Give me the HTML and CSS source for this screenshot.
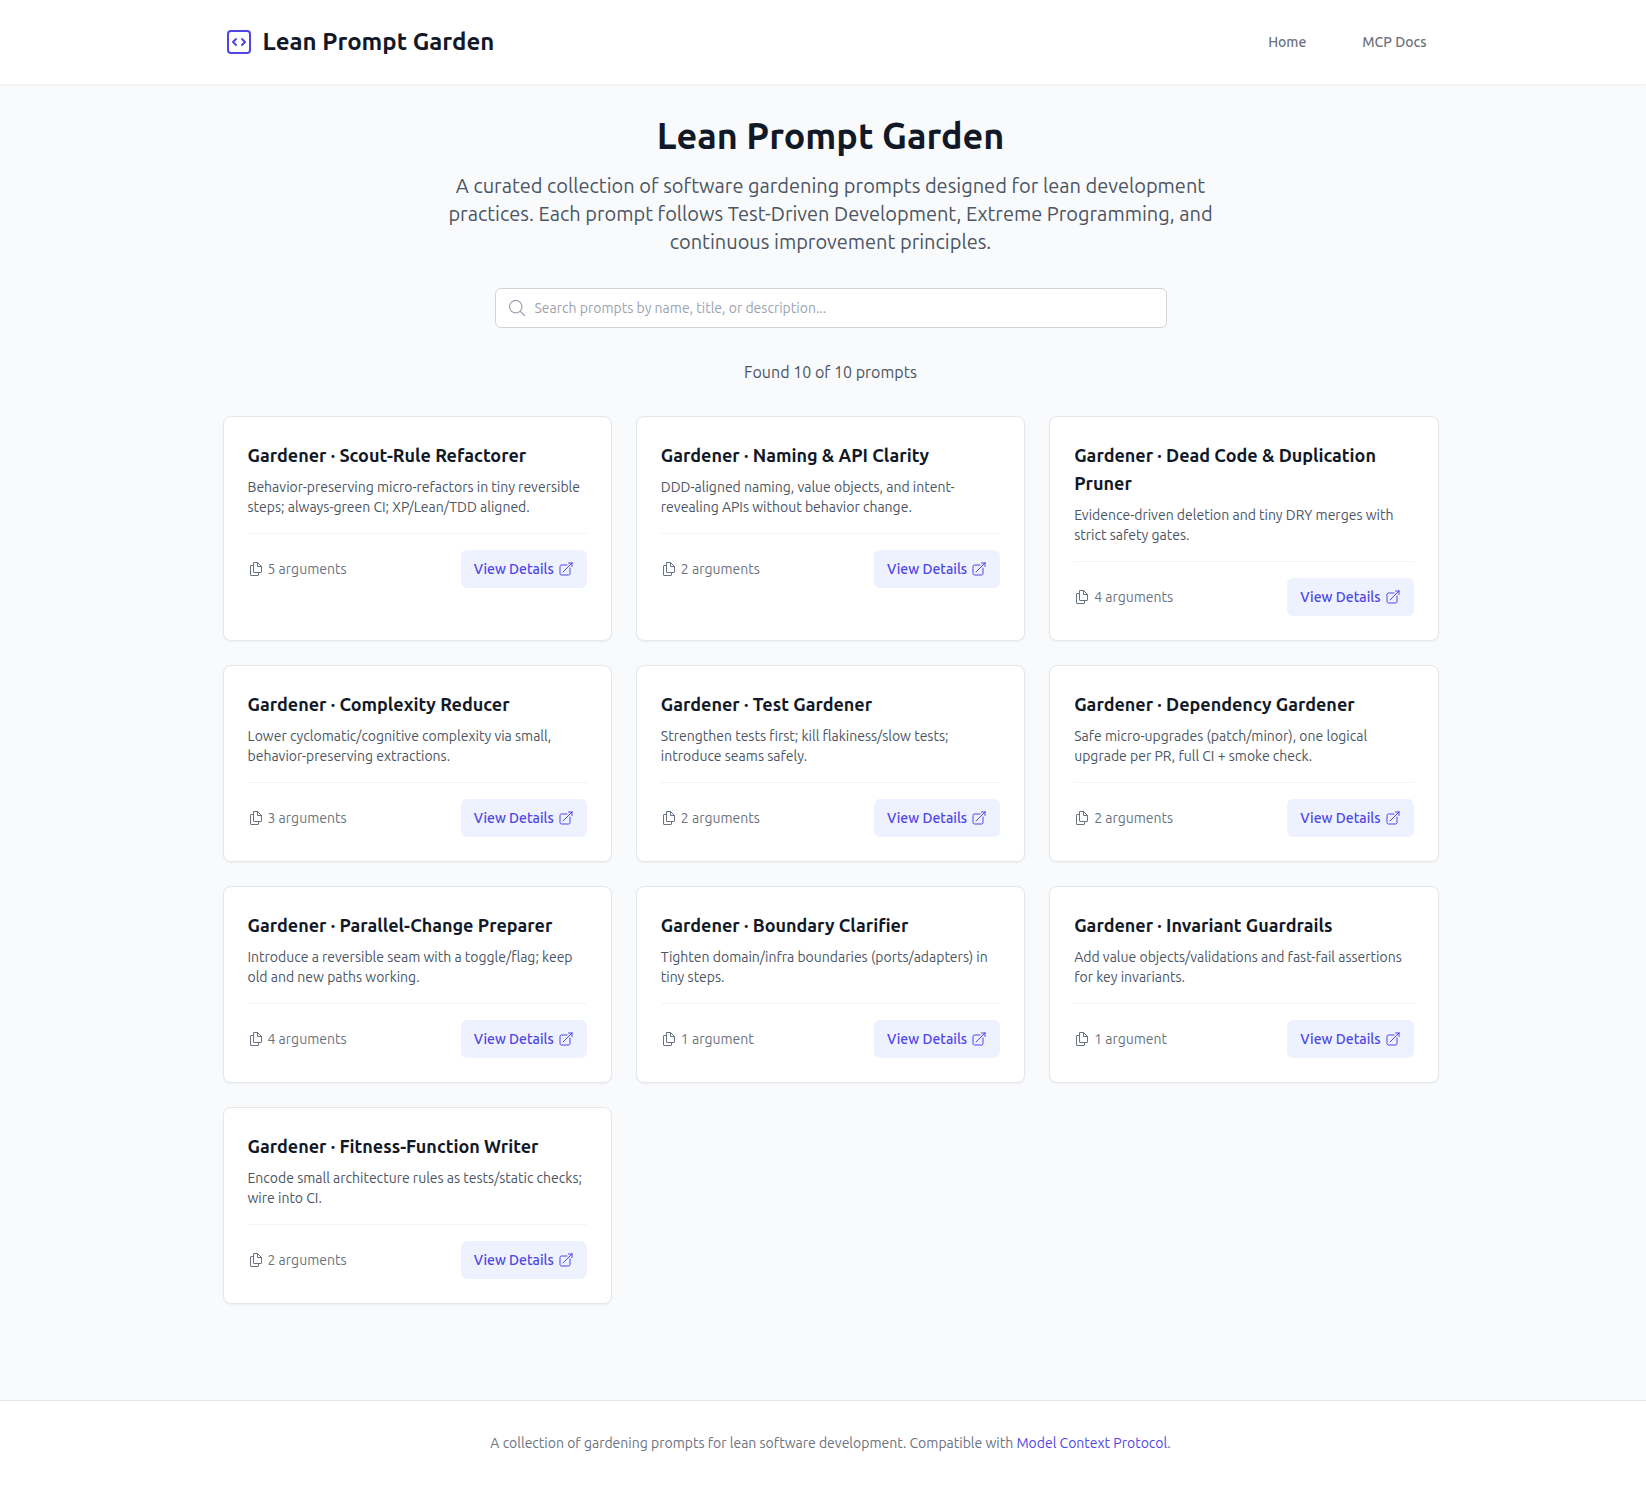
FILE: index.html
```html
<!DOCTYPE html>
<html lang="en">
<head>
<meta charset="utf-8">
<title>Lean Prompt Garden</title>
<meta name="viewport" content="width=device-width, initial-scale=1">
<link rel="stylesheet" href="styles.css">
</head>
<body>
<svg class="sprite" aria-hidden="true">
  <symbol id="icon-code" viewBox="0 0 24 24"><path d="M14.25 9.75 16.5 12l-2.25 2.25m-4.5 0L7.5 12l2.25-2.25M6 20.25h12A2.25 2.25 0 0 0 20.25 18V6A2.25 2.25 0 0 0 18 3.75H6A2.25 2.25 0 0 0 3.75 6v12A2.25 2.25 0 0 0 6 20.25Z"/></symbol>
  <symbol id="icon-search" viewBox="0 0 24 24"><path d="m21 21-5.197-5.197m0 0A7.5 7.5 0 1 0 5.196 5.196a7.5 7.5 0 0 0 10.607 10.607Z"/></symbol>
  <symbol id="icon-docs" viewBox="0 0 24 24"><path d="M8.25 6.75H4.5a.75.75 0 0 0-.75.75V21a.75.75 0 0 0 .75.75H15a.75.75 0 0 0 .75-.75v-3.75M9 2.25h5.25l6 6v8.25a.75.75 0 0 1-.75.75H9a.75.75 0 0 1-.75-.75V3A.75.75 0 0 1 9 2.25ZM14.25 2.25v6h6"/></symbol>
  <symbol id="icon-open" viewBox="0 0 24 24"><path d="M13.5 6H5.25A2.25 2.25 0 0 0 3 8.25v10.5A2.25 2.25 0 0 0 5.25 21h10.5A2.25 2.25 0 0 0 18 18.75V10.5m-10.5 6L21 3m0 0h-5.25M21 3v5.25"/></symbol>
</svg>

<header class="site-header">
  <div class="container header-row">
    <a class="brand" href="#"><svg class="icon icon-lg" aria-hidden="true"><use href="#icon-code"/></svg><span>Lean Prompt Garden</span></a>
    <nav class="nav">
      <a class="nav-link" href="#">Home</a>
      <a class="nav-link" href="#">MCP Docs</a>
    </nav>
  </div>
</header>

<main class="main">
  <div class="container">
  <section class="hero">
    <h1 class="hero-title">Lean Prompt Garden</h1>
    <p class="hero-text">A curated collection of software gardening prompts designed for lean development practices. Each prompt follows Test-Driven Development, Extreme Programming, and continuous improvement principles.</p>
  </section>

  <label class="search">
    <svg class="icon icon-md" aria-hidden="true"><use href="#icon-search"/></svg>
    <input class="search-input" type="text" aria-label="Search prompts" placeholder="Search prompts by name, title, or description...">
  </label>

  <p class="count">Found 10 of 10 prompts</p>

  <section class="grid">
    <article class="card">
      <h2 class="card-title">Gardener · Scout-Rule Refactorer</h2>
      <p class="card-text">Behavior-preserving micro-refactors in tiny reversible steps; always-green CI; XP/Lean/TDD aligned.</p>
      <div class="card-footer">
        <span class="args"><svg class="icon icon-sm" aria-hidden="true"><use href="#icon-docs"/></svg>5 arguments</span>
        <a class="details" href="#">View Details<svg class="icon icon-sm" aria-hidden="true"><use href="#icon-open"/></svg></a>
      </div>
    </article>
    <article class="card">
      <h2 class="card-title">Gardener · Naming &amp; API Clarity</h2>
      <p class="card-text">DDD-aligned naming, value objects, and intent-revealing APIs without behavior change.</p>
      <div class="card-footer">
        <span class="args"><svg class="icon icon-sm" aria-hidden="true"><use href="#icon-docs"/></svg>2 arguments</span>
        <a class="details" href="#">View Details<svg class="icon icon-sm" aria-hidden="true"><use href="#icon-open"/></svg></a>
      </div>
    </article>
    <article class="card">
      <h2 class="card-title">Gardener · Dead Code &amp; Duplication Pruner</h2>
      <p class="card-text">Evidence-driven deletion and tiny DRY merges with strict safety gates.</p>
      <div class="card-footer">
        <span class="args"><svg class="icon icon-sm" aria-hidden="true"><use href="#icon-docs"/></svg>4 arguments</span>
        <a class="details" href="#">View Details<svg class="icon icon-sm" aria-hidden="true"><use href="#icon-open"/></svg></a>
      </div>
    </article>
    <article class="card">
      <h2 class="card-title">Gardener · Complexity Reducer</h2>
      <p class="card-text">Lower cyclomatic/cognitive complexity via small, behavior-preserving extractions.</p>
      <div class="card-footer">
        <span class="args"><svg class="icon icon-sm" aria-hidden="true"><use href="#icon-docs"/></svg>3 arguments</span>
        <a class="details" href="#">View Details<svg class="icon icon-sm" aria-hidden="true"><use href="#icon-open"/></svg></a>
      </div>
    </article>
    <article class="card">
      <h2 class="card-title">Gardener · Test Gardener</h2>
      <p class="card-text">Strengthen tests first; kill flakiness/slow tests; introduce seams safely.</p>
      <div class="card-footer">
        <span class="args"><svg class="icon icon-sm" aria-hidden="true"><use href="#icon-docs"/></svg>2 arguments</span>
        <a class="details" href="#">View Details<svg class="icon icon-sm" aria-hidden="true"><use href="#icon-open"/></svg></a>
      </div>
    </article>
    <article class="card">
      <h2 class="card-title">Gardener · Dependency Gardener</h2>
      <p class="card-text">Safe micro-upgrades (patch/minor), one logical upgrade per PR, full CI + smoke check.</p>
      <div class="card-footer">
        <span class="args"><svg class="icon icon-sm" aria-hidden="true"><use href="#icon-docs"/></svg>2 arguments</span>
        <a class="details" href="#">View Details<svg class="icon icon-sm" aria-hidden="true"><use href="#icon-open"/></svg></a>
      </div>
    </article>
    <article class="card">
      <h2 class="card-title">Gardener · Parallel-Change Preparer</h2>
      <p class="card-text">Introduce a reversible seam with a toggle/flag; keep old and new paths working.</p>
      <div class="card-footer">
        <span class="args"><svg class="icon icon-sm" aria-hidden="true"><use href="#icon-docs"/></svg>4 arguments</span>
        <a class="details" href="#">View Details<svg class="icon icon-sm" aria-hidden="true"><use href="#icon-open"/></svg></a>
      </div>
    </article>
    <article class="card">
      <h2 class="card-title">Gardener · Boundary Clarifier</h2>
      <p class="card-text">Tighten domain/infra boundaries (ports/adapters) in tiny steps.</p>
      <div class="card-footer">
        <span class="args"><svg class="icon icon-sm" aria-hidden="true"><use href="#icon-docs"/></svg>1 argument</span>
        <a class="details" href="#">View Details<svg class="icon icon-sm" aria-hidden="true"><use href="#icon-open"/></svg></a>
      </div>
    </article>
    <article class="card">
      <h2 class="card-title">Gardener · Invariant Guardrails</h2>
      <p class="card-text">Add value objects/validations and fast-fail assertions for key invariants.</p>
      <div class="card-footer">
        <span class="args"><svg class="icon icon-sm" aria-hidden="true"><use href="#icon-docs"/></svg>1 argument</span>
        <a class="details" href="#">View Details<svg class="icon icon-sm" aria-hidden="true"><use href="#icon-open"/></svg></a>
      </div>
    </article>
    <article class="card">
      <h2 class="card-title">Gardener · Fitness-Function Writer</h2>
      <p class="card-text">Encode small architecture rules as tests/static checks; wire into CI.</p>
      <div class="card-footer">
        <span class="args"><svg class="icon icon-sm" aria-hidden="true"><use href="#icon-docs"/></svg>2 arguments</span>
        <a class="details" href="#">View Details<svg class="icon icon-sm" aria-hidden="true"><use href="#icon-open"/></svg></a>
      </div>
    </article>
  </section>
  </div>
</main>

<footer class="site-footer">
  <div class="container">
    <p class="footer-text">A collection of gardening prompts for lean software development. Compatible with <a class="footer-link" href="#">Model Context Protocol</a>.</p>
  </div>
</footer>
</body>
</html>
```
FILE: styles.css
```css
*, *::before, *::after { box-sizing: border-box; }

body {
  margin: 0;
  background: #f9fafb;
  color: #111827;
  font-family: Ubuntu, Roboto, sans-serif;
  font-size: 16px;
  line-height: 24px;
}

h1, h2, p { margin: 0; }
a { color: inherit; text-decoration: none; }

.sprite { display: none; }

.icon {
  flex: none;
  fill: none;
  stroke: currentColor;
  stroke-width: 1.5;
  stroke-linecap: round;
  stroke-linejoin: round;
}
.icon-sm { width: 16px; height: 16px; }
.icon-md { width: 20px; height: 20px; }
.icon-lg { width: 32px; height: 32px; color: #4f46e5; }

.site-header, .main, .site-footer { padding-left: 15px; }

.container {
  max-width: 1280px;
  margin: 0 auto;
  padding: 0 32px;
}

.site-header {
  background: #fff;
  box-shadow: 0 1px 2px rgba(0, 0, 0, 0.05);
}
.header-row {
  display: flex;
  align-items: center;
  justify-content: space-between;
  padding-top: 24px;
  padding-bottom: 24px;
}
.brand {
  display: flex;
  align-items: center;
  gap: 8px;
  font-size: 24px;
  line-height: 36px;
  font-weight: 600;
}
.nav { display: flex; gap: 32px; }
.nav-link {
  padding: 8px 12px;
  color: #6b7280;
  font-size: 14px;
  line-height: 20px;
  font-weight: 500;
}

.main { padding-top: 32px; padding-bottom: 96px; }

.hero {
  max-width: 768px;
  margin: 0 auto 32px;
  text-align: center;
}
.hero-title {
  margin-bottom: 16px;
  font-size: 36px;
  line-height: 40px;
  font-weight: 600;
}
.hero-text {
  color: #4b5563;
  font-size: 20px;
  line-height: 28px;
}

.search {
  display: flex;
  align-items: center;
  gap: 8px;
  max-width: 672px;
  height: 40px;
  margin: 0 auto 32px;
  padding: 0 11px;
  border: 1px solid #d1d5db;
  border-radius: 6px;
  background: #fff;
  color: #9ca3af;
}
.search-input {
  flex: 1;
  min-width: 0;
  padding: 0;
  border: 0;
  outline: 0;
  background: transparent;
  color: #111827;
  font: inherit;
  font-size: 14px;
  line-height: 20px;
}
.search-input::placeholder { color: #9ca3af; }

.count {
  margin-bottom: 32px;
  color: #4b5563;
  text-align: center;
}

.grid {
  display: grid;
  grid-template-columns: repeat(3, minmax(0, 1fr));
  gap: 24px;
}
.card {
  padding: 24px;
  border: 1px solid #e5e7eb;
  border-radius: 8px;
  background: #fff;
  box-shadow: 0 1px 2px rgba(0, 0, 0, 0.05);
}
.card-title {
  margin-bottom: 8px;
  font-size: 18px;
  line-height: 28px;
  font-weight: 600;
}
.card-text {
  margin-bottom: 16px;
  color: #4b5563;
  font-size: 14px;
  line-height: 20px;
}
.card-footer {
  display: flex;
  align-items: center;
  justify-content: space-between;
  padding-top: 16px;
  border-top: 1px solid #f3f4f6;
  font-size: 14px;
  line-height: 20px;
}
.args, .details {
  display: flex;
  align-items: center;
  gap: 4px;
}
.args { color: #6b7280; }
.details {
  padding: 8px 12px;
  border: 1px solid transparent;
  border-radius: 6px;
  background: #eef2ff;
  color: #4f46e5;
  font-weight: 500;
}

.site-footer {
  padding-top: 32px;
  padding-bottom: 32px;
  border-top: 1px solid #e5e7eb;
  background: #fff;
}
.footer-text {
  color: #6b7280;
  font-size: 14px;
  line-height: 20px;
  text-align: center;
}
.footer-link { color: #4f46e5; }

@media (max-width: 1023px) {
  .grid { grid-template-columns: repeat(2, minmax(0, 1fr)); }
}
@media (max-width: 639px) {
  .grid { grid-template-columns: minmax(0, 1fr); }
}
```
